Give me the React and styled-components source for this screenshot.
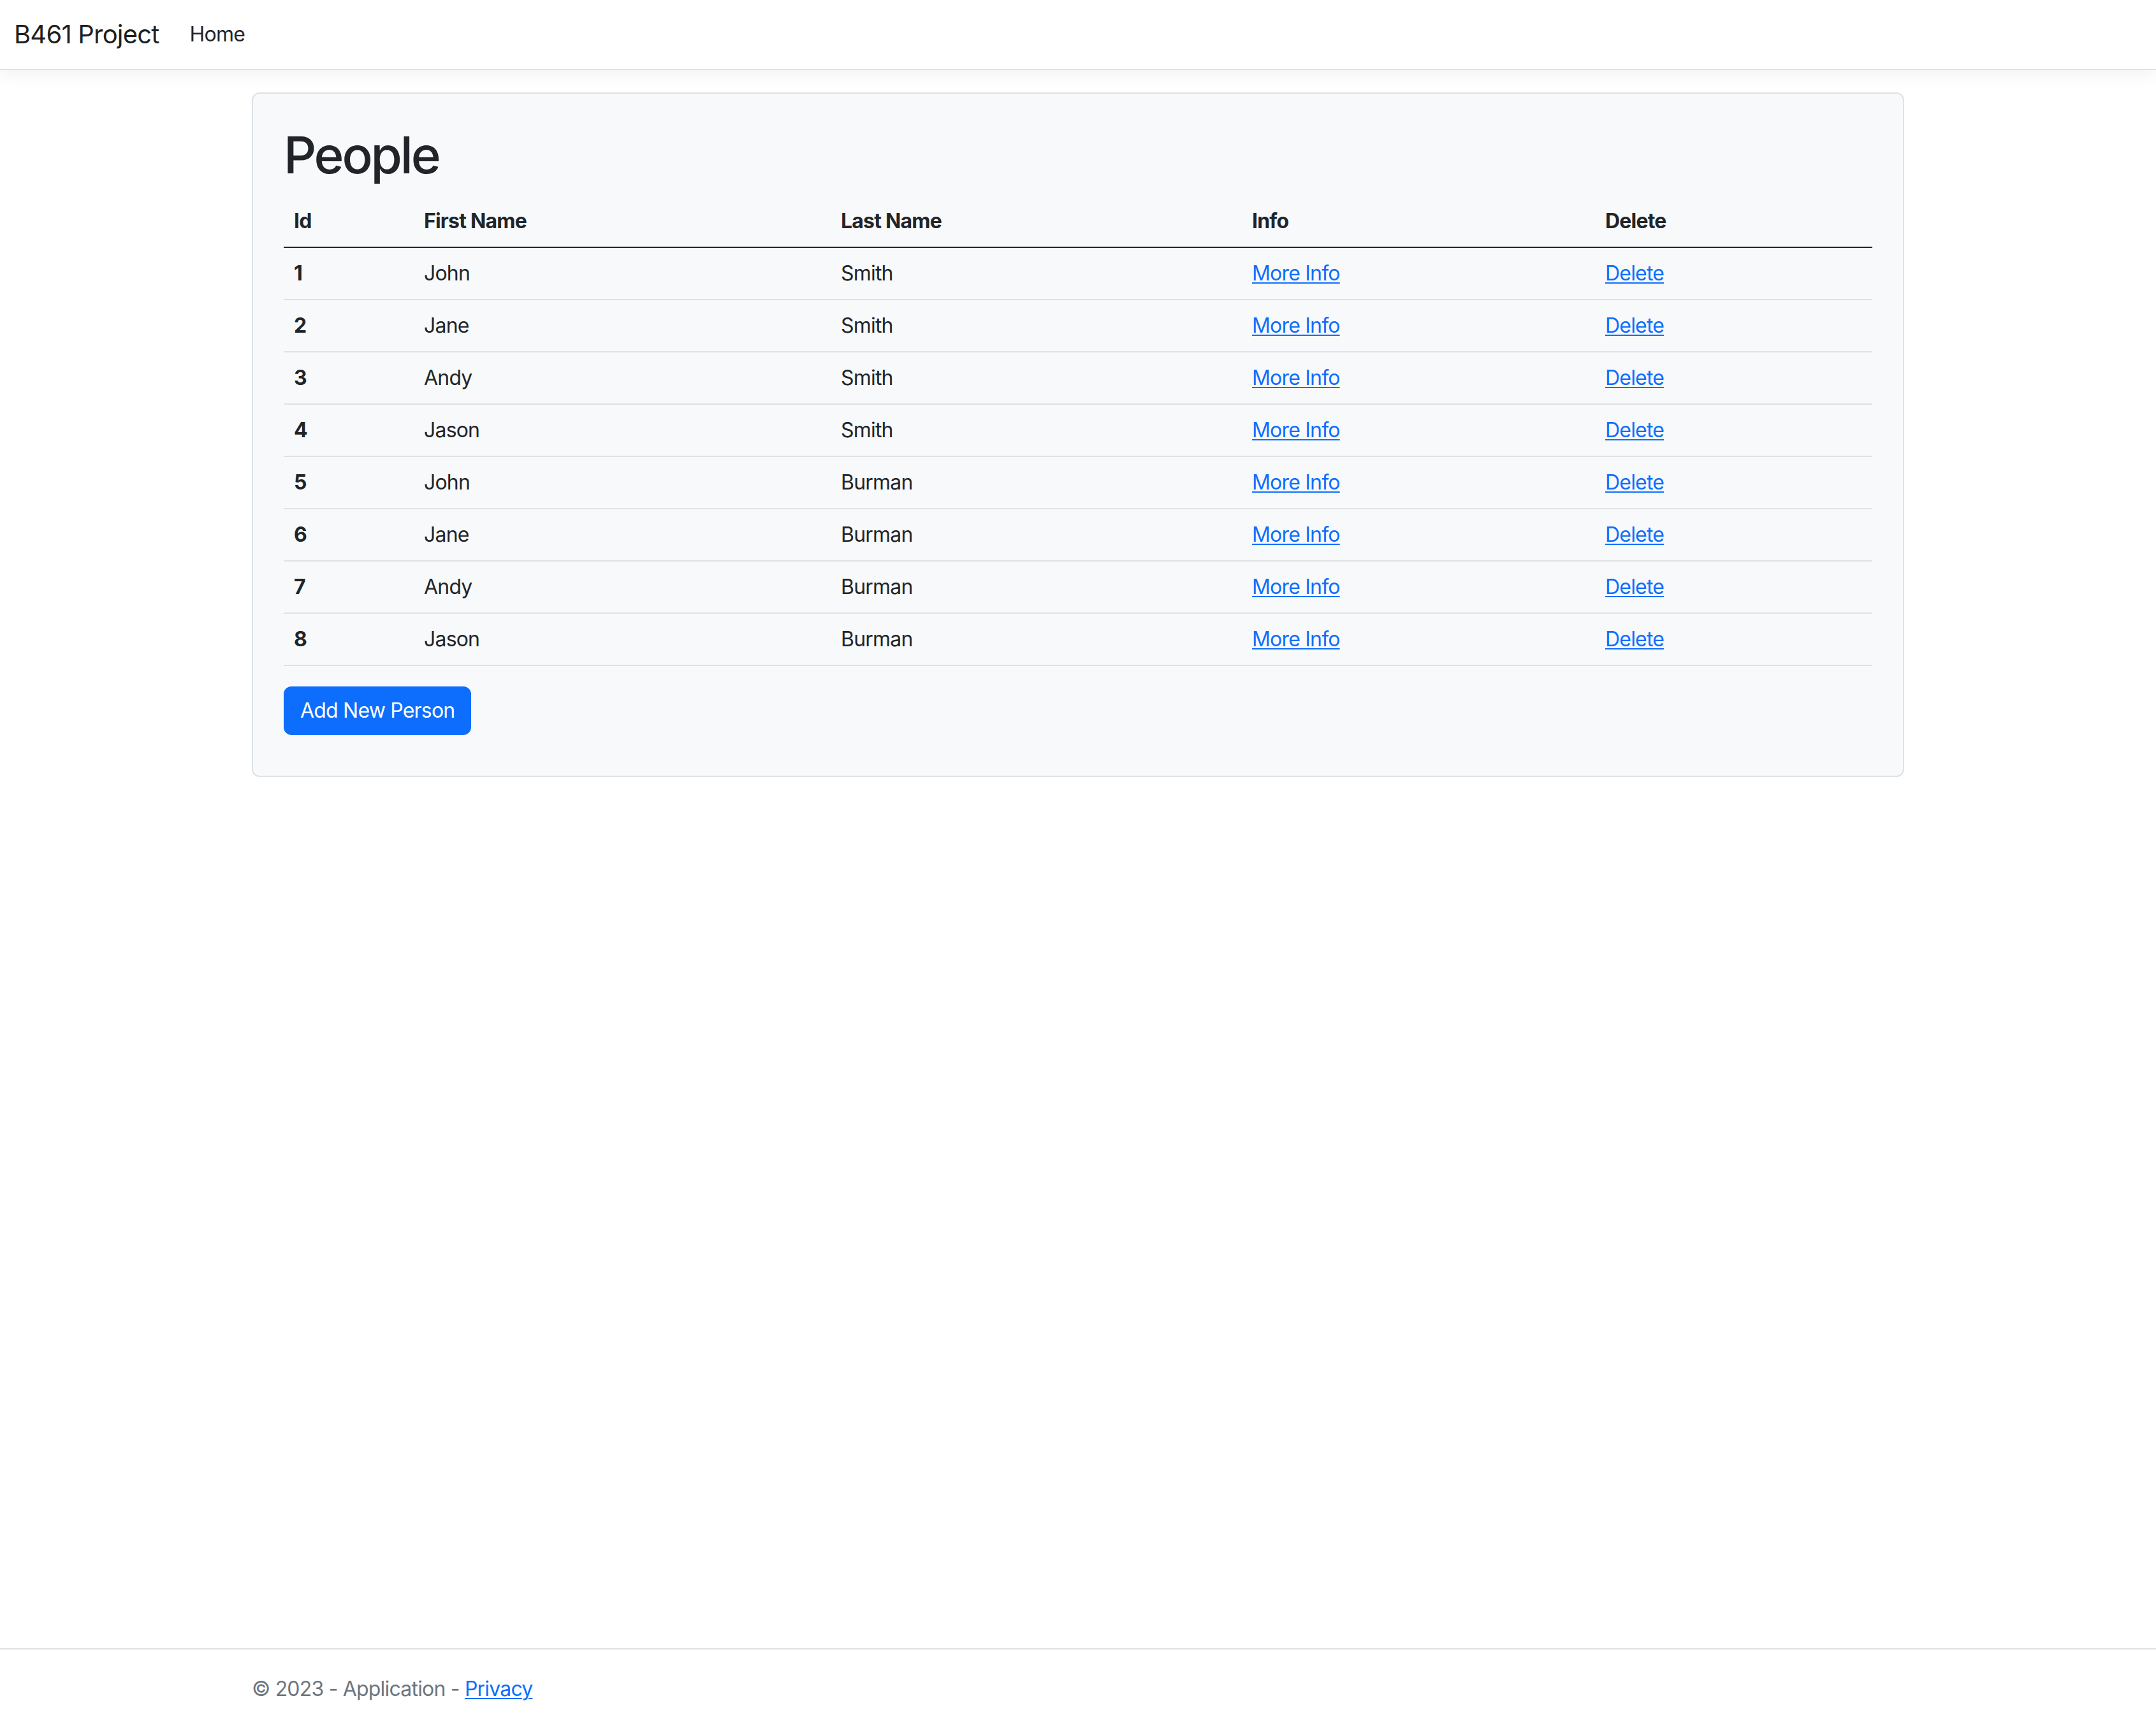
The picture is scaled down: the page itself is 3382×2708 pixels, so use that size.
import React from 'react';
import styled, { createGlobalStyle } from 'styled-components';

const GlobalStyle = createGlobalStyle`
  html, body {
    margin: 0;
    padding: 0;
    background: #fff;
  }
  body {
    font-family: Inter, "Liberation Sans", sans-serif;
    font-size: 32px;
    line-height: 1.5;
    letter-spacing: -0.025em;
    color: #212529;
  }
  * { box-sizing: border-box; }
`;

const Page = styled.div`
  min-height: 100vh;
  display: flex;
  flex-direction: column;
`;

const Navbar = styled.nav`
  display: flex;
  align-items: center;
  height: 110px;
  padding: 0 22px;
  background: #fff;
  border-bottom: 2px solid #dee2e6;
  box-shadow: 0 8px 24px rgba(0, 0, 0, 0.05);
`;

const Brand = styled.a`
  font-size: 40px;
  line-height: 60px;
  padding: 10px 0;
  margin-right: 32px;
  color: rgba(0, 0, 0, 0.9);
  text-decoration: none;
`;

const NavLink = styled.a`
  padding: 16px;
  font-size: 32px;
  color: #212529;
  text-decoration: none;
`;

const Container = styled.div`
  width: 100%;
  max-width: 2640px;
  margin: 0 auto;
  padding: 0 24px;
`;

const Main = styled.main`
  padding-top: 35px;
  padding-bottom: 32px;
`;

const Card = styled.div`
  background: #f8f9fa;
  border: 2px solid #dee2e6;
  border-radius: 12px;
  padding: 48px 48px 64px;
`;

const Title = styled.h1`
  margin: 0 0 16px;
  font-size: 80px;
  font-weight: 500;
  line-height: 1.2;
  letter-spacing: -0.04em;
`;

const Table = styled.table`
  width: 100%;
  border-collapse: collapse;
  table-layout: fixed;
  margin-bottom: 32px;
`;

const HeadCell = styled.th`
  text-align: left;
  font-weight: 700;
  padding: 16px;
  border-bottom: 2px solid #212529;
`;

const Cell = styled.td`
  padding: 16px;
  border-bottom: 2px solid #dee2e6;
  font-weight: ${p => (p.$bold ? 700 : 400)};
`;

const Link = styled.a`
  color: #0d6efd;
  text-decoration: underline;
  text-underline-offset: 3px;
  text-decoration-thickness: 2px;
`;

const PrimaryButton = styled.a`
  display: inline-block;
  padding: 12px 24px;
  font-size: 32px;
  line-height: 48px;
  color: #fff;
  background: #0d6efd;
  border: 2px solid #0d6efd;
  border-radius: 12px;
  text-decoration: none;
`;

const Footer = styled.footer`
  margin-top: auto;
  border-top: 2px solid #dee2e6;
  height: 122px;
  line-height: 124px;
  color: #6c757d;
  white-space: nowrap;
`;

const columns = [
  { label: 'Id', width: 204 },
  { label: 'First Name', width: 654 },
  { label: 'Last Name', width: 645 },
  { label: 'Info', width: 554 },
  { label: 'Delete', width: 435 },
];

const people = [
  { id: 1, first: 'John', last: 'Smith' },
  { id: 2, first: 'Jane', last: 'Smith' },
  { id: 3, first: 'Andy', last: 'Smith' },
  { id: 4, first: 'Jason', last: 'Smith' },
  { id: 5, first: 'John', last: 'Burman' },
  { id: 6, first: 'Jane', last: 'Burman' },
  { id: 7, first: 'Andy', last: 'Burman' },
  { id: 8, first: 'Jason', last: 'Burman' },
];

function App() {
  return (
    <Page>
      <GlobalStyle />
      <Navbar>
        <Brand href="#">B461 Project</Brand>
        <NavLink href="#">Home</NavLink>
      </Navbar>
      <Container>
        <Main>
          <Card>
            <Title>People</Title>
            <Table>
              <colgroup>
                {columns.map(c => (
                  <col key={c.label} style={{ width: c.width }} />
                ))}
              </colgroup>
              <thead>
                <tr>
                  {columns.map(c => (
                    <HeadCell key={c.label}>{c.label}</HeadCell>
                  ))}
                </tr>
              </thead>
              <tbody>
                {people.map(p => (
                  <tr key={p.id}>
                    <Cell $bold>{p.id}</Cell>
                    <Cell>{p.first}</Cell>
                    <Cell>{p.last}</Cell>
                    <Cell><Link href="#">More Info</Link></Cell>
                    <Cell><Link href="#">Delete</Link></Cell>
                  </tr>
                ))}
              </tbody>
            </Table>
            <PrimaryButton href="#">Add New Person</PrimaryButton>
          </Card>
        </Main>
      </Container>
      <Footer>
        <Container>
          © 2023 - Application - <Link href="#">Privacy</Link>
        </Container>
      </Footer>
    </Page>
  );
}

export default App;
